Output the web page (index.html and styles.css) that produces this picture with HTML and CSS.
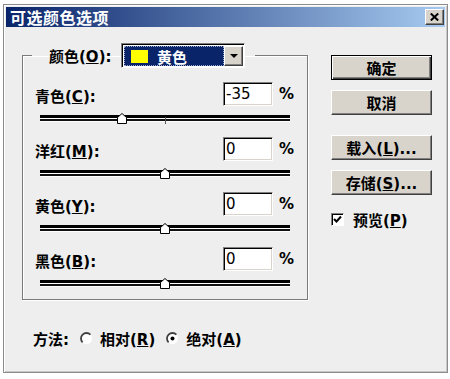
FILE: index.html
```html
<!DOCTYPE html>
<html lang="zh-CN">
<head>
  <meta charset="UTF-8" />
  <meta name="viewport" content="width=device-width, initial-scale=1.0"/>
  <title>可选颜色选项</title>
  <link rel="stylesheet" href="styles.css">
</head>
<body>
  <div class="dialog">
    <div class="titlebar">
      <span class="title">可选颜色选项</span>
      <button class="close" title="关闭">
        <svg width="9" height="8" viewBox="0 0 9 8"><path d="M0.8 0.5 L8.2 7.5 M8.2 0.5 L0.8 7.5" stroke="#000" stroke-width="2"/></svg>
      </button>
    </div>

    <div class="dialog-body">
      <fieldset class="group">
        <legend>
          <span class="legend-label">颜色(<u>O</u>):</span>
          <div class="select">
            <div class="select-value"><span class="swatch"></span><span>黄色</span></div>
            <div class="select-arrow">
              <svg width="8" height="4" viewBox="0 0 8 4"><path d="M0 0 H8 L4 4 Z" fill="#000"/></svg>
            </div>
          </div>
        </legend>

        <div class="row">
          <div class="row-head">
            <span class="row-label">青色(<u>C</u>):</span>
            <input class="num" type="text" value="-35">
            <span class="pct">%</span>
          </div>
          <div class="slider">
            <span class="track"></span><span class="tick"></span>
            <svg class="thumb" style="left: 77px;" width="10" height="11" viewBox="0 0 10 11"><path d="M5 0.5 L9.5 4.5 V10.5 H0.5 V4.5 Z" fill="#fff" stroke="#000"/></svg>
          </div>
        </div>

        <div class="row">
          <div class="row-head">
            <span class="row-label">洋红(<u>M</u>):</span>
            <input class="num" type="text" value="0">
            <span class="pct">%</span>
          </div>
          <div class="slider">
            <span class="track"></span><span class="tick"></span>
            <svg class="thumb" style="left: 120px;" width="10" height="11" viewBox="0 0 10 11"><path d="M5 0.5 L9.5 4.5 V10.5 H0.5 V4.5 Z" fill="#fff" stroke="#000"/></svg>
          </div>
        </div>

        <div class="row">
          <div class="row-head">
            <span class="row-label">黄色(<u>Y</u>):</span>
            <input class="num" type="text" value="0">
            <span class="pct">%</span>
          </div>
          <div class="slider">
            <span class="track"></span><span class="tick"></span>
            <svg class="thumb" style="left: 120px;" width="10" height="11" viewBox="0 0 10 11"><path d="M5 0.5 L9.5 4.5 V10.5 H0.5 V4.5 Z" fill="#fff" stroke="#000"/></svg>
          </div>
        </div>

        <div class="row">
          <div class="row-head">
            <span class="row-label">黑色(<u>B</u>):</span>
            <input class="num" type="text" value="0">
            <span class="pct">%</span>
          </div>
          <div class="slider">
            <span class="track"></span><span class="tick"></span>
            <svg class="thumb" style="left: 120px;" width="10" height="11" viewBox="0 0 10 11"><path d="M5 0.5 L9.5 4.5 V10.5 H0.5 V4.5 Z" fill="#fff" stroke="#000"/></svg>
          </div>
        </div>
      </fieldset>

      <div class="actions">
        <button class="btn default">确定</button>
        <button class="btn btn-cancel">取消</button>
        <button class="btn">载入(<u>L</u>)...</button>
        <button class="btn">存储(<u>S</u>)...</button>
        <label class="check">
          <span class="check-box">
            <svg width="9" height="9" viewBox="0 0 9 9"><path d="M1 4 L3.5 6.5 L8 1.5" stroke="#000" stroke-width="2" fill="none"/></svg>
          </span>
          <span>预览(<u>P</u>)</span>
        </label>
      </div>
    </div>

    <div class="method">
      <span class="method-label">方法:</span>
      <label class="radio">
        <svg width="13" height="13" viewBox="0 0 13 13"><circle cx="6.5" cy="6.5" r="5.5" fill="#fff"/><path d="M10.4 2.6 A5.5 5.5 0 0 0 2.6 10.4" stroke="#404040" stroke-width="1.8" fill="none"/></svg>
        <span>相对(<u>R</u>)</span>
      </label>
      <label class="radio">
        <svg width="13" height="13" viewBox="0 0 13 13"><circle cx="6.5" cy="6.5" r="5.5" fill="#fff"/><path d="M10.4 2.6 A5.5 5.5 0 0 0 2.6 10.4" stroke="#404040" stroke-width="1.8" fill="none"/><circle cx="6.5" cy="6.5" r="2" fill="#000"/></svg>
        <span>绝对(<u>A</u>)</span>
      </label>
    </div>
  </div>
</body>
</html>
```

FILE: styles.css
```css
body {
  margin: 0;
  background: #fff;
  font: bold 15px "DejaVu Sans", "Noto Sans CJK SC", sans-serif;
  color: #000;
}
u {
  text-decoration-thickness: 1px;
  text-underline-offset: 1px;
}
.dialog {
  box-sizing: border-box;
  width: 445px;
  height: 369px;
  margin: 4px 2px 0 3px;
  padding: 2px;
  background: #eeeeee;
  border: 1px solid #8c8c8c;
  box-shadow: inset 1px 1px #fff, inset -1px -1px #c8c8c8;
}
.titlebar {
  height: 20px;
  display: flex;
  align-items: center;
  justify-content: space-between;
  padding: 0 1px 0 4px;
  background: linear-gradient(to right, #0a246a, #a6caf0);
  color: #fff;
}
.title {
  font-size: 16px;
  letter-spacing: 0.5px;
}
.close {
  width: 19px;
  height: 16px;
  padding: 0;
  display: flex;
  align-items: center;
  justify-content: center;
  background: #d8d4cc;
  border: 1px solid;
  border-color: #fff #404040 #404040 #fff;
  box-shadow: inset -1px -1px #808080;
}

.dialog-body {
  display: flex;
  align-items: flex-start;
  padding: 16px 0 0 16px;
}
.group {
  width: 286px;
  box-sizing: border-box;
  margin: 0;
  padding: 14px 0 8px 0;
  border: 1px solid #7a7a7a;
  box-shadow: inset 1px 1px #fff, 1px 1px #fff;
}
.group legend {
  display: flex;
  align-items: center;
  margin-left: 9px;
  padding: 0 10px 0 17px;
}
.legend-label {
  width: 72px;
}
.select {
  display: flex;
  width: 124px;
  height: 25px;
  box-sizing: border-box;
  padding: 2px 1px 1px 2px;
  background: #fff;
  border: 1px solid;
  border-color: #808080 #fff #fff #808080;
  box-shadow: inset 1px 1px #000;
}
.select-value {
  flex: 1;
  display: flex;
  align-items: center;
  gap: 9px;
  padding-left: 7px;
  background: #0a246a;
  color: #fff;
  outline: 1px dotted #9aa6c8;
  outline-offset: -1px;
}
.swatch {
  width: 17px;
  height: 13px;
  background: #ffff00;
}
.select-arrow {
  width: 17px;
  display: flex;
  align-items: center;
  justify-content: center;
  background: #d8d4cc;
  border: 1px solid;
  border-color: #fff #404040 #404040 #fff;
  box-shadow: inset -1px -1px #808080;
}

.row {
  padding: 0 15px 0 12px;
  margin-bottom: 11px;
}
.row:last-child { margin-bottom: 0; }
.row-head {
  display: flex;
  align-items: center;
  height: 24px;
}
.row-label {
  flex: 1;
  padding-top: 2px;
}
.num {
  width: 50px;
  height: 24px;
  box-sizing: border-box;
  padding: 0 0 0 2px;
  font: 15px "DejaVu Sans", sans-serif;
  color: #000;
  background: #fff;
  border: 1px solid;
  border-color: #808080 #fff #fff #808080;
  box-shadow: inset 1px 1px #000, inset -1px -1px #d8d4cc;
}
.pct {
  width: 13px;
  margin-left: 6px;
}
.slider {
  position: relative;
  width: 250px;
  height: 14px;
  margin: 6px 0 0 5px;
}
.track {
  position: absolute;
  left: 0;
  right: 0;
  top: 3px;
  height: 1px;
  border-top: 3px solid #000;
  border-bottom: 2px solid #111;
  background: #fff;
  box-shadow: 0 1px #fff;
}
.tick {
  position: absolute;
  left: 125px;
  top: 5px;
  width: 1px;
  height: 7px;
  background: #555;
}
.thumb {
  position: absolute;
  top: 1px;
}

.actions {
  display: flex;
  flex-direction: column;
  width: 101px;
  margin-left: 23px;
  padding-top: 12px;
}
.btn {
  width: 101px;
  height: 25px;
  padding: 0;
  margin-bottom: 10px;
  font: inherit;
  color: #000;
  background: #d8d4cc;
  border: 1px solid;
  border-color: #fff #404040 #404040 #fff;
  box-shadow: inset -1px -1px #808080;
}
.btn.default {
  border: 1px solid #000;
  box-shadow: inset 1px 1px #fff, inset -1px -1px #404040, inset -2px -2px #808080;
}
.btn-cancel { margin-bottom: 20px; }
.check {
  display: flex;
  align-items: center;
  gap: 9px;
  height: 16px;
  margin-top: 6px;
}
.check-box {
  width: 13px;
  height: 13px;
  box-sizing: border-box;
  display: flex;
  align-items: center;
  justify-content: center;
  background: #fff;
  border: 1px solid;
  border-color: #808080 #fff #fff #808080;
  box-shadow: inset 1px 1px #000;
}

.method {
  display: flex;
  align-items: center;
  height: 24px;
  margin-top: 26px;
  padding-left: 27px;
}
.method-label {
  margin-right: 11px;
}
.radio {
  display: flex;
  align-items: center;
  gap: 7px;
  margin-right: 11px;
}
```
